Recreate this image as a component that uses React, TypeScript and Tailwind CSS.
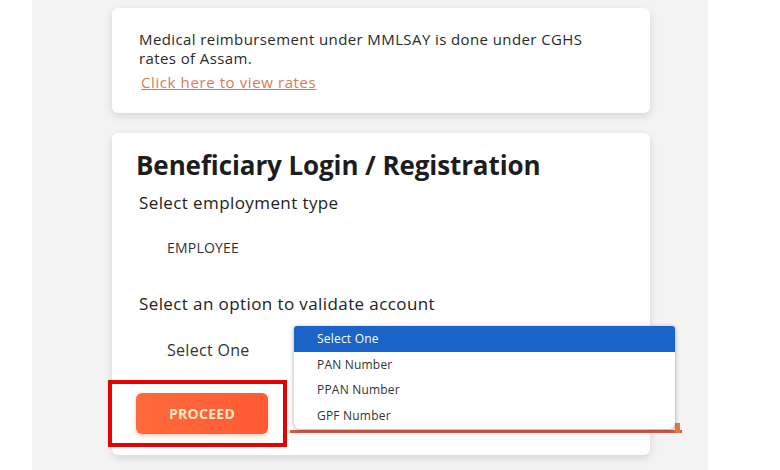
import React from "react";

export default function App() {
  const font = { fontFamily: '"Open Sans", "Liberation Sans", sans-serif' };
  return (
    <div className="w-[780px] h-[470px] bg-white flex overflow-hidden" style={font}>
      <div className="ml-[32px] w-[676px] h-full bg-[#f3f3f3] flex flex-col items-start pl-[80px] pt-[8px] gap-[20px]">
        <div className="w-[538px] h-[105px] bg-white rounded-md shadow-[0_3px_8px_rgba(0,0,0,0.12)] pl-[27px] pt-[22px]">
          <p className="text-[15px] leading-[19px] text-[#2a2a2a] tracking-[0.4px]">
            Medical reimbursement under MMLSAY is done under CGHS
            <br />
            rates of Assam.
          </p>
          <a className="block mt-[5px] ml-[2px] text-[15px] leading-[19px] text-[#e07a52] underline tracking-[0.6px]">
            Click here to view rates
          </a>
        </div>

        <div className="relative w-[538px] h-[322px] bg-white rounded-md shadow-[0_3px_8px_rgba(0,0,0,0.12)] pl-[24px] pt-[15px]">
          <h1 className="text-[26px] leading-[34px] font-bold text-[#1d1d1d] tracking-[-0.1px]">
            Beneficiary Login / Registration
          </h1>
          <p className="mt-[9px] ml-[3px] text-[17px] leading-[23px] text-[#222] tracking-[0.4px]">Select employment type</p>
          <p className="mt-[25px] ml-[31px] text-[14px] leading-[18px] text-[#333] tracking-[0.2px]">EMPLOYEE</p>
          <p className="mt-[35px] ml-[3px] text-[17px] leading-[23px] text-[#222] tracking-[0.4px]">Select an option to validate account</p>
          <p className="mt-[25px] ml-[31px] text-[16px] leading-[20px] text-[#333] tracking-[0.3px]">Select One</p>
          <div className="relative mt-[33px] w-[132px]">
            <button className="w-[132px] h-[41px] rounded-md bg-gradient-to-r from-[#ff6a3a] to-[#ff5a34] text-[#ffe7c4] font-bold text-[14px] tracking-[0.3px] shadow-[0_2px_4px_rgba(255,90,50,0.3)]">
              PROCEED
            </button>
            <div className="absolute left-[-28px] top-[-13px] w-[179px] h-[67px] border-[4px] border-[#e60000]" />
          </div>

          <div className="absolute left-[178px] top-[297px] w-[392px] h-[3px] bg-[#dc5a44]" />
          <div className="absolute left-[563px] top-[290px] w-[5px] h-[10px] bg-[#e07a40]" />
          <div className="absolute left-[182px] top-[193px] w-[381px] h-[103px] bg-white rounded-b-md rounded-t-[3px] shadow-[0_1px_4px_rgba(0,0,0,0.35)] overflow-hidden text-[12px] text-[#333] tracking-[0.2px]">
            <div className="h-[26px] bg-[#1a63c9] text-white pl-[23px] flex items-center">Select One</div>
            <div className="h-[25px] pl-[23px] flex items-center">PAN Number</div>
            <div className="h-[26px] pl-[23px] flex items-center">PPAN Number</div>
            <div className="h-[25px] pl-[23px] flex items-center">GPF Number</div>
          </div>
        </div>
      </div>
    </div>
  );
}
